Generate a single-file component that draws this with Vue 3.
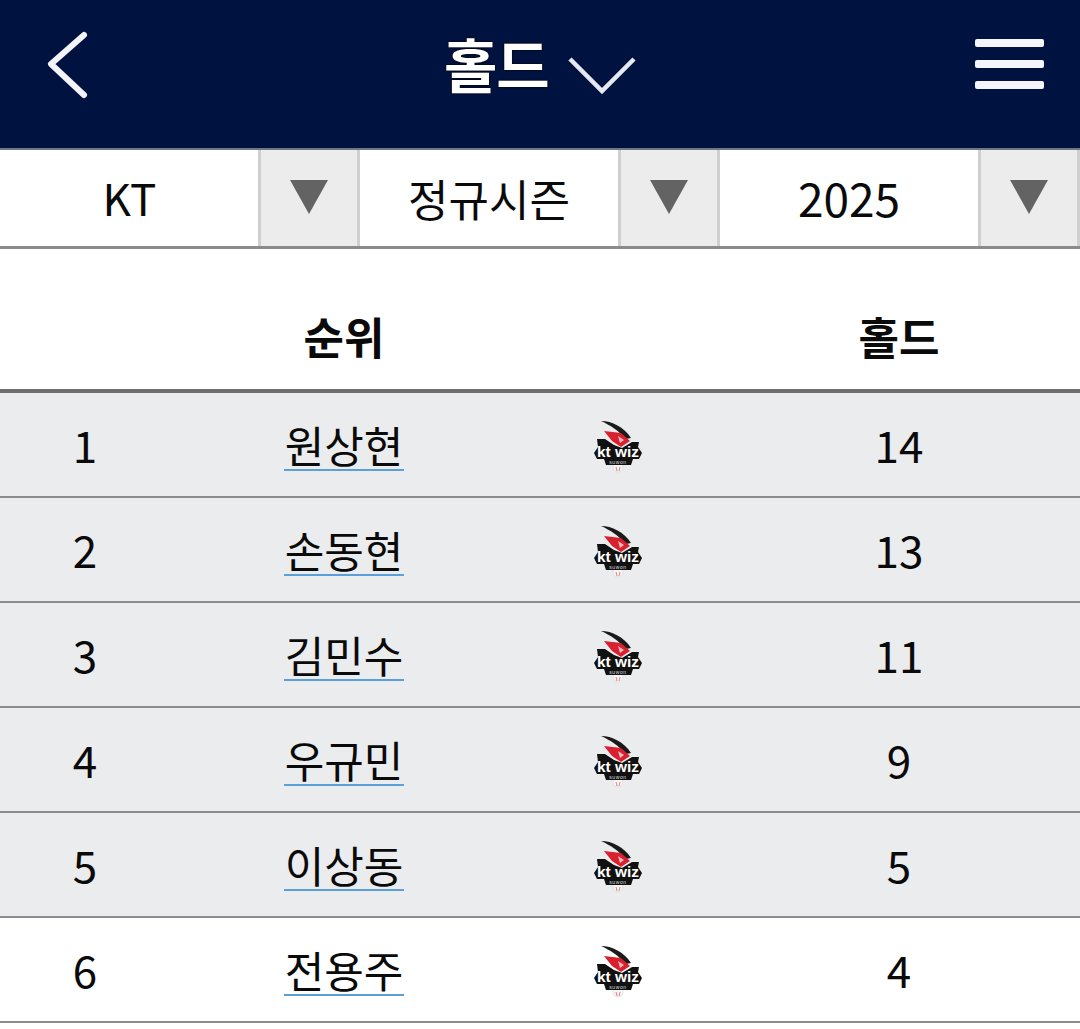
<script setup>
const selects = [
  { label: 'KT', cls: 'kt' },
  { label: '정규시즌', cls: 'season' },
  { label: '2025', cls: 'year' }
]
const rows = [
  { rank: 1, name: '원상현', value: 14, shaded: true },
  { rank: 2, name: '손동현', value: 13, shaded: true },
  { rank: 3, name: '김민수', value: 11, shaded: true },
  { rank: 4, name: '우규민', value: 9, shaded: true },
  { rank: 5, name: '이상동', value: 5, shaded: true },
  { rank: 6, name: '전용주', value: 4, shaded: false }
]
</script>

<template>
  <div class="page">
    <header class="topbar">
      <svg class="back" width="46" height="72" viewBox="0 0 46 72" fill="none">
        <path d="M38 5 L5 34 L38 65" stroke="#f2f4fa" stroke-width="6" stroke-linecap="round" stroke-linejoin="round" />
      </svg>
      <div class="title">
        <span class="title-text">홀드</span>
        <svg class="caret" width="72" height="44" viewBox="0 0 72 44" fill="none">
          <path d="M3 3 L35 35 L67 3" stroke="#e6e9f2" stroke-width="4.5" />
        </svg>
      </div>
      <div class="burger"><i></i><i></i><i></i></div>
    </header>

    <div class="filters">
      <div v-for="s in selects" :key="s.label" class="select">
        <div class="select-label" :class="s.cls">{{ s.label }}</div>
        <div class="select-btn"><span class="tri"></span></div>
      </div>
    </div>

    <div class="row head">
      <div></div>
      <div class="cell">순위</div>
      <div></div>
      <div class="cell">홀드</div>
    </div>

    <div v-for="r in rows" :key="r.rank" class="row body" :class="{ shaded: r.shaded }">
      <div class="cell">{{ r.rank }}</div>
      <div class="cell"><a class="name">{{ r.name }}</a></div>
      <div class="cell logo-cell">
        <svg class="logo" width="52" height="54" viewBox="0 0 52 54">
          <circle cx="26" cy="47" r="5" fill="#f6f6f6" stroke="#dcdcdc" stroke-width="0.8" />
          <path d="M24 47 L25 51 M28 47 L27 51" stroke="#d8606a" stroke-width="0.8" fill="none" />
          <path d="M9 1 C20 1 32 7 39 18 L34 19 C27 11 18 5 9 1Z" fill="#1a1a1a" />
          <path d="M12 11 L29 13 L38 21 L29 27 L20 21Z" fill="#d8202f" />
          <path d="M26 16 L32 20 L28 23Z" fill="#f0b9bd" />
          <path d="M5 19 L13 19 L22 25 L30 28 L40 22 L47 22 L46 27 L50 33 L47 39 L41 39 L39 45 L14 45 L12 39 L5 39 L2 33 L6 27Z" fill="#111" />
          <text x="26" y="37" text-anchor="middle" textLength="42" lengthAdjust="spacingAndGlyphs" class="logo-text">kt wiz</text>
          <text x="26" y="43.5" text-anchor="middle" class="logo-sub">suwon</text>
        </svg>
      </div>
      <div class="cell">{{ r.value }}</div>
    </div>
  </div>
</template>

<style scoped>
.page {
  width: 1080px;
  height: 1029px;
  overflow: hidden;
  background: #fff;
  color: #0a0a0a;
  font-family: "Noto Sans CJK KR", "Noto Sans", sans-serif;
}
.topbar {
  box-sizing: border-box;
  height: 150px;
  background: #001340;
  border-bottom: 2px solid #6f7686;
  position: relative;
}
.back {
  position: absolute;
  left: 46px;
  top: 30px;
}
.title {
  position: absolute;
  left: 444px;
  top: 25px;
  display: flex;
  align-items: flex-start;
}
.title-text {
  color: #fff;
  font-size: 58px;
  font-weight: 700;
  line-height: 76px;
  letter-spacing: -1px;
  text-shadow: 0 0 3px #000;
}
.caret {
  margin-left: 18px;
  margin-top: 31px;
}
.burger {
  position: absolute;
  left: 975px;
  top: 39px;
  width: 69px;
  display: flex;
  flex-direction: column;
  gap: 13px;
}
.burger i {
  display: block;
  height: 8px;
  border-radius: 2px;
  background: #f4f6fb;
}
.filters {
  display: flex;
  height: 99px;
  box-sizing: border-box;
  border-bottom: 3px solid #8a8a8a;
}
.select {
  display: flex;
  width: 360px;
}
.select-label {
  width: 258px;
  text-align: center;
  font-size: 44px;
  line-height: 96px;
}
.kt {
  line-height: 94px;
  padding-left: 1px;
  box-sizing: border-box;
}
.year {
  font-size: 46px;
  line-height: 94px;
}
.select-btn {
  box-sizing: border-box;
  width: 102px;
  background: #ececed;
  border-left: 3px solid #cfcfcf;
  border-right: 3px solid #cfcfcf;
  display: flex;
  justify-content: center;
  padding-top: 30px;
}
.tri {
  width: 0;
  height: 0;
  border-left: 19px solid transparent;
  border-right: 19px solid transparent;
  border-top: 34px solid #636363;
}
.row {
  display: grid;
  grid-template-columns: 170px 348px 200px 362px;
  box-sizing: border-box;
  align-items: center;
  text-align: center;
}
.head {
  height: 144px;
  padding-top: 34px;
  border-bottom: 4px solid #6e6e6e;
  font-size: 44px;
  font-weight: 700;
}
.body {
  height: 105px;
  font-size: 44px;
  padding-bottom: 2px;
  border-bottom: 2px solid #8c8c8c;
  background: #fff;
}
.shaded {
  background: #eaecee;
}
.cell {
  line-height: 98px;
}
.name {
  display: inline-block;
  line-height: 49px;
  padding: 0 1px;
  border-bottom: 2px solid #5a9fd8;
  font-size: 43px;
}
.logo-cell {
  display: flex;
  justify-content: center;
  align-items: center;
}
.logo {
  display: block;
  margin-top: 7px;
}
.logo-text {
  fill: #fff;
  font-family: "Liberation Sans", sans-serif;
  font-size: 15px;
  font-weight: 700;
}
.logo-sub {
  fill: #ddd;
  font-family: "Liberation Sans", sans-serif;
  font-size: 5px;
  letter-spacing: 0.6px;
}
</style>
